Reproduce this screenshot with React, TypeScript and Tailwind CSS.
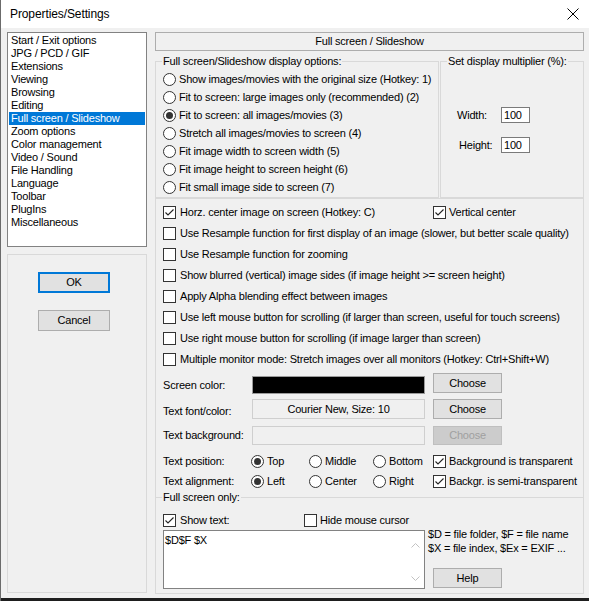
import React from "react";

const items = [
  "Start / Exit options",
  "JPG / PCD / GIF",
  "Extensions",
  "Viewing",
  "Browsing",
  "Editing",
  "Full screen / Slideshow",
  "Zoom options",
  "Color management",
  "Video / Sound",
  "File Handling",
  "Language",
  "Toolbar",
  "PlugIns",
  "Miscellaneous",
];

const radios = [
  "Show images/movies with the original size (Hotkey: 1)",
  "Fit to screen: large images only (recommended) (2)",
  "Fit to screen: all images/movies (3)",
  "Stretch all images/movies to screen (4)",
  "Fit image width to screen width (5)",
  "Fit image height to screen height (6)",
  "Fit small image side to screen (7)",
];

const checks = [
  "Use Resample function for first display of an image (slower, but better scale quality)",
  "Use Resample function for zooming",
  "Show blurred (vertical) image sides (if image height >= screen height)",
  "Apply Alpha blending effect between images",
  "Use left mouse button for scrolling (if larger than screen, useful for touch screens)",
  "Use right mouse button for scrolling (if image larger than screen)",
  "Multiple monitor mode: Stretch images over all monitors (Hotkey: Ctrl+Shift+W)",
];

function Radio({ checked }: { checked?: boolean }) {
  return (
    <span className="w-[13px] h-[13px] rounded-full border border-[#333333] bg-white flex items-center justify-center shrink-0">
      {checked && <span className="w-[7px] h-[7px] rounded-full bg-[#333333]" />}
    </span>
  );
}

function Check({ checked }: { checked?: boolean }) {
  return (
    <span className="w-[13px] h-[13px] border border-[#333333] bg-white flex items-center justify-center shrink-0">
      {checked && (
        <svg width="11" height="11" viewBox="0 0 11 11">
          <polyline points="1.5,5.5 4,8 9.5,2.5" fill="none" stroke="#222222" strokeWidth="1.1" />
        </svg>
      )}
    </span>
  );
}

function Btn({ children, disabled }: { children: React.ReactNode; disabled?: boolean }) {
  return (
    <div
      className={
        disabled
          ? "w-[69px] h-full bg-[#cccccc] border border-[#bfbfbf] text-[#a0a0a0] flex items-center justify-center"
          : "w-[69px] h-full bg-[#e1e1e1] border border-[#adadad] flex items-center justify-center"
      }
    >
      {children}
    </div>
  );
}

export default function App() {
  return (
    <div className="w-[589px] h-[601px] bg-[#f0f0f0] flex flex-col overflow-hidden border-l border-[#6b6b6b] font-['Liberation_Sans',Arial,sans-serif] text-[11px] tracking-[-0.2px] text-black leading-[13px]">
      {/* Title bar */}
      <div className="h-[28px] shrink-0 bg-white flex items-center justify-between pl-[9px] pr-[10px]">
        <span className="text-[12px] tracking-[-0.1px]">Properties/Settings</span>
        <svg width="12" height="12" viewBox="0 0 12 12">
          <line x1="0.5" y1="0.5" x2="11.5" y2="11.5" stroke="#000" strokeWidth="1" />
          <line x1="11.5" y1="0.5" x2="0.5" y2="11.5" stroke="#000" strokeWidth="1" />
        </svg>
      </div>

      {/* Body */}
      <div className="flex-1 flex pl-[6px] pt-[4px]">
        {/* Left column */}
        <div className="w-[140px] flex flex-col shrink-0">
          <div className="h-[215px] bg-white border border-[#828282] pt-[1px] px-[1px]">
            {items.map((it) => (
              <div
                key={it}
                className={
                  it === "Full screen / Slideshow"
                    ? "h-[13px] leading-[13px] pl-[2px] bg-[#0078d7] text-white whitespace-nowrap"
                    : "h-[13px] leading-[13px] pl-[2px] whitespace-nowrap"
                }
              >
                {it}
              </div>
            ))}
          </div>
          <div className="mt-[7px] h-[339px] border border-[#d9d9d9] pt-[17px] pl-[30px] flex flex-col gap-[17px]">
            <div className="w-[72px] h-[21px] border-2 border-[#0078d7] bg-[#e1e1e1] flex items-center justify-center">OK</div>
            <div className="w-[72px] h-[21px] border border-[#adadad] bg-[#e1e1e1] flex items-center justify-center">Cancel</div>
          </div>
        </div>

        {/* Right column */}
        <div className="w-[429px] ml-[8px] flex flex-col shrink-0">
          <div className="h-[19px] border border-[#adadad] bg-[#f0f0f0] flex items-center justify-center">
            Full screen / Slideshow
          </div>

          <div className="mt-[4px] flex gap-[1px] h-[143px]">
            <fieldset className="w-[284px] h-[143px] border border-[#d9d9d9] pl-[6px]">
              <legend className="px-[1px] leading-[13px]">Full screen/Slideshow display options:</legend>
              <div className="pt-[2px] flex flex-col">
                {radios.map((r, i) => (
                  <div key={r} className="h-[18px] flex items-center ml-[1px] gap-[3px] whitespace-nowrap">
                    <Radio checked={i === 2} />
                    <span>{r}</span>
                  </div>
                ))}
              </div>
            </fieldset>
            <fieldset className="w-[144px] h-[143px] border border-[#d9d9d9] pl-[6px]">
              <legend className="px-[1px] leading-[13px]">Set display multiplier (%):</legend>
              <div className="mt-[39px] h-[16px] flex items-center">
                <span className="ml-[10px] w-[44px]">Width:</span>
                <div className="w-[29px] h-[16px] bg-white border border-[#7a7a7a] pl-[2px] flex items-center">100</div>
              </div>
              <div className="mt-[14px] h-[16px] flex items-center">
                <span className="ml-[12px] w-[42px]">Height:</span>
                <div className="w-[29px] h-[16px] bg-white border border-[#7a7a7a] pl-[2px] flex items-center">100</div>
              </div>
            </fieldset>
          </div>

          <div className="h-[396px] border border-[#d9d9d9] flex flex-col pt-[3px]">
            <div className="pl-[7px] flex flex-col">
              <div className="h-[21px] flex items-center whitespace-nowrap">
                <div className="w-[270px] flex items-center gap-[4px]">
                  <Check checked />
                  <span>Horz. center image on screen (Hotkey: C)</span>
                </div>
                <div className="flex items-center gap-[3px]">
                  <Check checked />
                  <span>Vertical center</span>
                </div>
              </div>
              {checks.map((c) => (
                <div key={c} className="h-[21px] flex items-center gap-[4px] whitespace-nowrap">
                  <Check />
                  <span>{c}</span>
                </div>
              ))}

              {/* Screen color */}
              <div className="mt-[3px] h-[21px] flex items-start">
                <span className="w-[89px] mt-[6px]">Screen color:</span>
                <div className="w-[173px] h-[18px] mt-[3px] bg-black border border-[#9a9a9a]" />
                <div className="ml-[8px] h-[20px]">
                  <Btn>Choose</Btn>
                </div>
              </div>
              {/* Text font */}
              <div className="mt-[5px] h-[20px] flex items-start">
                <span className="w-[89px] mt-[6px]">Text font/color:</span>
                <div className="w-[173px] h-[20px] bg-[#f0f0f0] border border-[#cfcfcf] flex items-center justify-center">
                  Courier New, Size: 10
                </div>
                <div className="ml-[8px] h-[20px]">
                  <Btn>Choose</Btn>
                </div>
              </div>
              {/* Text background */}
              <div className="mt-[7px] h-[19px] flex items-start">
                <span className="w-[89px] mt-[3px]">Text background:</span>
                <div className="w-[173px] h-[19px] bg-[#f0f0f0] border border-[#cfcfcf]" />
                <div className="ml-[8px] h-[19px]">
                  <Btn disabled>Choose</Btn>
                </div>
              </div>
              {/* Text position */}
              <div className="mt-[6px] h-[20px] flex items-center whitespace-nowrap">
                <span className="w-[88px]">Text position:</span>
                <div className="w-[58px] flex items-center gap-[3px]"><Radio checked /><span>Top</span></div>
                <div className="w-[64px] flex items-center gap-[3px]"><Radio /><span>Middle</span></div>
                <div className="w-[60px] flex items-center gap-[3px]"><Radio /><span>Bottom</span></div>
                <div className="flex items-center gap-[3px]"><Check checked /><span>Background is transparent</span></div>
              </div>
              {/* Text alignment */}
              <div className="h-[20px] flex items-center whitespace-nowrap">
                <span className="w-[88px]">Text alignment:</span>
                <div className="w-[58px] flex items-center gap-[3px]"><Radio checked /><span>Left</span></div>
                <div className="w-[64px] flex items-center gap-[3px]"><Radio /><span>Center</span></div>
                <div className="w-[60px] flex items-center gap-[3px]"><Radio /><span>Right</span></div>
                <div className="flex items-center gap-[3px]"><Check checked /><span>Backgr. is semi-transparent</span></div>
              </div>
            </div>

            <fieldset className="border-t border-[#d9d9d9] pl-[6px]">
              <legend className="px-[1px] leading-[12px]">Full screen only:</legend>
              <div className="mt-[8px] h-[18px] flex items-center ml-[1px] whitespace-nowrap">
                <div className="w-[141px] flex items-center gap-[4px]">
                  <Check checked />
                  <span>Show text:</span>
                </div>
                <div className="flex items-center gap-[3px]">
                  <Check />
                  <span>Hide mouse cursor</span>
                </div>
              </div>
              <div className="mt-[1px] ml-[1px] flex items-start">
                <div className="w-[262px] h-[59px] bg-white border border-[#828282] flex">
                  <div className="flex-1 pl-[1px] pt-[2.5px]">$D$F $X</div>
                  <div className="w-[17px] flex flex-col items-center justify-between pt-[11.5px] pb-[7.5px]">
                    <svg width="9" height="5" viewBox="0 0 9 5">
                      <polyline points="0.5,4.5 4.5,0.5 8.5,4.5" fill="none" stroke="#c2c2c2" strokeWidth="1" />
                    </svg>
                    <svg width="9" height="5" viewBox="0 0 9 5">
                      <polyline points="0.5,0.5 4.5,4.5 8.5,0.5" fill="none" stroke="#c2c2c2" strokeWidth="1" />
                    </svg>
                  </div>
                </div>
                <div className="ml-[3px] mt-[-3px] flex flex-col whitespace-nowrap">
                  <span className="leading-[14px]">$D = file folder, $F = file name</span>
                  <span className="leading-[14px]">$X = file index, $Ex = EXIF ...</span>
                  <div className="mt-[13px] ml-[5px] h-[20px]">
                    <Btn>Help</Btn>
                  </div>
                </div>
              </div>
            </fieldset>
          </div>
        </div>
      </div>

      <div className="h-[3px] shrink-0 bg-[#1e1e1e]" />
    </div>
  );
}
